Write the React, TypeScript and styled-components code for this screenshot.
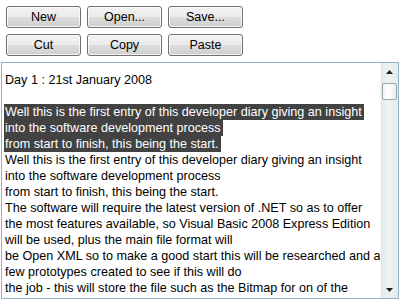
import React from "react"
import styled, { createGlobalStyle } from "styled-components"

const GlobalStyle = createGlobalStyle`
    html, body {
        margin: 0;
        padding: 0;
        background: #ffffff;
    }
    body {
        font-family: "Liberation Sans", Arial, sans-serif;
    }
`

const Window = styled.div`
    width: 400px;
    height: 300px;
    display: flex;
    flex-direction: column;
    overflow: hidden;
    background: #ffffff;
`

const Toolbar = styled.div`
    display: grid;
    grid-template-columns: repeat(3, 75px);
    grid-auto-rows: 22px;
    gap: 6px;
    padding: 6px 0 0 6px;
    height: 56px;
    box-sizing: border-box;
`

const Button = styled.button`
    box-sizing: border-box;
    margin: 0;
    padding: 0 0 1px;
    border: 1px solid #707070;
    border-radius: 3px;
    background: linear-gradient(
        to bottom,
        #f2f2f2 0%,
        #ebebeb 50%,
        #dddddd 50%,
        #cfcfcf 100%
    );
    box-shadow: inset 0 0 0 1px rgba(255, 255, 255, 0.75);
    font-family: "Liberation Sans", Arial, sans-serif;
    font-size: 12.5px;
    color: #000000;
`

const Editor = styled.div`
    flex: 1;
    margin: 6px 1px 1px 1px;
    border: 1px solid #8fb3c2;
    display: flex;
    overflow: hidden;
`

const Document = styled.div`
    flex: 1;
    padding: 9px 0 0 3px;
    font-family: "Liberation Sans", Arial, sans-serif;
    font-size: 12.6px;
    line-height: 16px;
    color: #000000;
    overflow: hidden;
`

const Line = styled.div`
    height: 16px;
    white-space: nowrap;
`

const Selected = styled.span`
    background: #424242;
    color: #ffffff;
    padding: 0 2px 0 1px;
    margin-left: -1px;
    display: inline-block;
    height: 16px;
`

const ScrollBar = styled.div`
    width: 17px;
    display: flex;
    flex-direction: column;
    align-items: center;
    background: linear-gradient(to right, #e2e7ea, #eef2f4 40%, #e6ebee);
    border-left: 1px solid #f4f6f7;
`

const Arrow = styled.div`
    height: 17px;
    width: 17px;
    display: flex;
    align-items: center;
    justify-content: center;
`

const Thumb = styled.div`
    box-sizing: border-box;
    width: 15px;
    height: 17px;
    margin-top: 3px;
    border: 1px solid #9aa6ae;
    border-radius: 2px;
    background: linear-gradient(to right, #f4f4f4, #ffffff 45%, #e9ecee);
`

const Track = styled.div`
    flex: 1;
`

const UpArrow = () => (
    <svg width="7" height="4" viewBox="0 0 7 4">
        <path d="M0 4 L3.5 0 L7 4 Z" fill="#202020" />
    </svg>
)

const DownArrow = () => (
    <svg width="7" height="4" viewBox="0 0 7 4">
        <path d="M0 0 L7 0 L3.5 4 Z" fill="#202020" />
    </svg>
)

const intro = [
    "Well this is the first entry of this developer diary giving an insight",
    "into the software development process",
    "from start to finish, this being the start.",
]

const body = [
    "The software will require the latest version of .NET so as to offer",
    "the most features available, so Visual Basic 2008 Express Edition",
    "will be used, plus the main file format will",
    "be Open XML so to make a good start this will be researched and a",
    "few prototypes created to see if this will do",
    "the job - this will store the file such as the Bitmap for on of the",
]

const buttons = ["New", "Open...", "Save...", "Cut", "Copy", "Paste"]

export default function App(): JSX.Element {
    return (
        <Window>
            <GlobalStyle />
            <Toolbar>
                {buttons.map((b) => (
                    <Button key={b}>{b}</Button>
                ))}
            </Toolbar>
            <Editor>
                <Document>
                    <Line>Day 1 : 21st January 2008</Line>
                    <Line />
                    {intro.map((l) => (
                        <Line key={"s" + l}>
                            <Selected>{l}</Selected>
                        </Line>
                    ))}
                    {intro.map((l) => (
                        <Line key={l}>{l}</Line>
                    ))}
                    {body.map((l) => (
                        <Line key={l}>{l}</Line>
                    ))}
                </Document>
                <ScrollBar>
                    <Arrow>
                        <UpArrow />
                    </Arrow>
                    <Thumb />
                    <Track />
                    <Arrow>
                        <DownArrow />
                    </Arrow>
                </ScrollBar>
            </Editor>
        </Window>
    )
}
